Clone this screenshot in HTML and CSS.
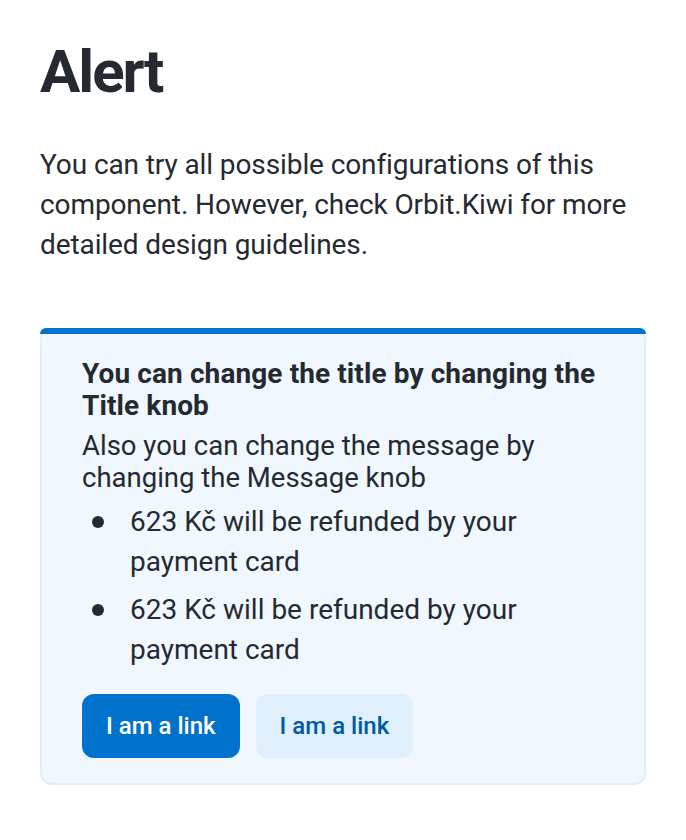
FILE: index.html
```html
<!DOCTYPE html>
<html>
<head>
<meta charset="utf-8">
<link rel="stylesheet" href="styles.css">
</head>
<body>
<main class="page">
  <h1 class="title">Alert</h1>
  <p class="intro">You can try all possible configurations of this component. However, check Orbit.Kiwi for more detailed design guidelines.</p>
  <div class="alert">
    <div class="alert-title">You can change the title by changing the Title knob</div>
    <div class="alert-message">Also you can change the message by changing the Message knob</div>
    <ul class="list">
      <li>623 Kč will be refunded by your payment card</li>
      <li>623 Kč will be refunded by your payment card</li>
    </ul>
    <div class="actions">
      <a class="btn btn-primary">I am a link</a>
      <a class="btn btn-secondary">I am a link</a>
    </div>
  </div>
</main>
</body>
</html>
```
FILE: styles.css
```css
* { box-sizing: border-box; }
html, body { margin: 0; padding: 0; background: #fff; }
body { font-family: Roboto, "Noto Sans", sans-serif; color: #252a31; }
.page { padding: 40px 40px; }
.title { margin: 0; font-size: 60px; line-height: 64px; font-weight: 700; letter-spacing: -2px; }
.intro { margin: 41px 0 0; font-size: 28px; line-height: 40px; letter-spacing: -0.1px; max-width: 606px; }
.alert {
  position: relative;
  margin-top: 63px;
  width: 606px;
  background: #f0f7fe;
  border: 2px solid #dfeffb;
  border-top: 0;
  border-radius: 12px;
  padding: 30px 40px 25px 40px;
}
.alert::before {
  content: "";
  position: absolute;
  top: 0; left: -2px; right: -2px;
  height: 6px;
  background: #0172cb;
  border-radius: 12px 12px 0 0;
}
.alert-title { font-size: 28px; line-height: 32px; font-weight: 700; letter-spacing: 0.1px; }
.alert-message { font-size: 27.5px; line-height: 32px; margin-top: 8px; }
.list { list-style: none; margin: 8px 0 0; padding: 0; font-size: 28px; line-height: 40px; }
.list li { display: flex; margin-bottom: 8px; }
.list li::before {
  content: "";
  flex-shrink: 0;
  width: 12px; height: 12px;
  margin: 14px 26px 0 10px;
  border-radius: 50%;
  background: #252a31;
}
.actions { display: flex; gap: 16px; margin-top: 24px; }
.btn {
  display: flex; align-items: center; justify-content: center;
  height: 64px; padding: 0 24px;
  border-radius: 12px;
  font-size: 24px; font-weight: 500;
  text-decoration: none;
}
.btn-primary { background: #0172cb; color: #fff; }
.btn-secondary { background: #dfeffc; color: #005aa3; }
```
